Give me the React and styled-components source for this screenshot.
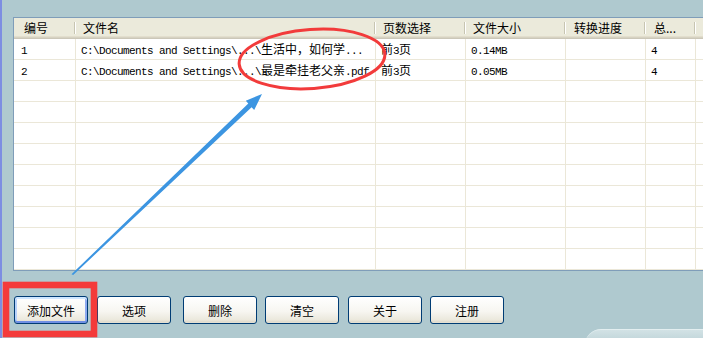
import styled, { createGlobalStyle } from "styled-components";

const GlobalStyle = createGlobalStyle`
  html, body {
    margin: 0;
    padding: 0;
  }
  body {
    width: 703px;
    height: 338px;
    overflow: hidden;
    background: #afc9cf;
    font-family: "Noto Sans CJK SC", "DejaVu Sans", sans-serif;
    font-size: 12px;
    color: #000;
  }
`;

const Page = styled.div`
  position: relative;
  width: 703px;
  height: 338px;
  overflow: hidden;
`;

const Window = styled.div`
  box-sizing: border-box;
  width: 703px;
  height: 338px;
  border-left: 2px solid #7d8de2;
  padding: 17px 0 0 11px;
  display: flex;
  flex-direction: column;
`;

const ListView = styled.div`
  width: 720px;
  border: 1px solid #7f9db9;
  border-right: none;
  background: #fff;
`;

const columns = "62px 300px 90px 100px 80px 50px 1fr";

const HeaderRow = styled.div`
  display: grid;
  grid-template-columns: ${columns};
  height: 21px;
  background: #ebeadb;
  box-shadow: inset 0 -1px #cbc7b8, inset 0 -2px #d6d2c2, inset 0 -3px #e2decd;
`;

const HeaderCell = styled.div`
  position: relative;
  padding-left: ${(p) => p.$pad || 8}px;
  line-height: 19px;
  white-space: nowrap;
  overflow: hidden;

  &::after {
    content: "";
    position: absolute;
    right: 1px;
    top: 4px;
    bottom: 5px;
    width: 1px;
    background: #c7c5b2;
    box-shadow: 1px 0 #fff;
  }
`;

const Row = styled.div`
  display: grid;
  grid-template-columns: ${columns};
  height: 21px;
  box-sizing: border-box;
  border-bottom: 1px solid #ebe7d8;
`;

const Cell = styled.div`
  box-sizing: border-box;
  border-right: 1px solid #ebe7d8;
  padding-left: ${(p) => p.$pad || 5}px;
  line-height: 20px;
  white-space: nowrap;
  overflow: hidden;
`;

const Latin = styled.span`
  font-family: "Liberation Mono", "DejaVu Sans Mono", monospace;
  font-size: 11px;
  letter-spacing: -0.6px;
`;

const Footer = styled.div`
  display: flex;
  align-items: flex-start;
  padding: 25px 0 0 1px;
`;

const Button = styled.button`
  box-sizing: border-box;
  width: 74px;
  height: 28px;
  margin: 0 0 0 ${(p) => p.$space || 0}px;
  padding: 0;
  border: 1px solid #003c74;
  border-radius: 3px;
  background: linear-gradient(180deg, #ffffff 0%, #f7f6f1 55%, #ebe8dc 88%, #d8d2c4 100%);
  font-family: "Noto Sans CJK SC", sans-serif;
  font-size: 12px;
  color: #000;
  box-shadow: ${(p) =>
    p.$default
      ? "inset 0 2px #cee7ff, inset 0 -2px #6f8fe4, inset 2px 0 #b8d2fa, inset -2px 0 #8eaaf0"
      : "inset 0 -1px #e3dfd2"};
`;

const Corner = styled.div`
  margin: 33px 0 0 auto;
  width: 118px;
  height: 20px;
  border-top-left-radius: 16px;
  border-top: 1px solid #e3eef0;
  background: linear-gradient(180deg, #d2e2e5 0%, #bfd4d8 60%, #b6cdd2 100%);
`;

const Annotations = styled.svg`
  position: absolute;
  left: 0;
  top: 0;
  pointer-events: none;
`;

const headers = [
  { label: "编号", pad: 10 },
  { label: "文件名", pad: 7 },
  { label: "页数选择", pad: 7 },
  { label: "文件大小", pad: 7 },
  { label: "转换进度", pad: 8 },
  { label: "总...", pad: 8 },
  { label: "", pad: 8 },
];

const files = [
  ["1", "C:\\Documents and Settings\\...\\生活中，如何学...", "前3页", "0.14MB", "", "4"],
  ["2", "C:\\Documents and Settings\\...\\最是牵挂老父亲.pdf", "前3页", "0.05MB", "", "4"],
];

const buttons = [
  { label: "添加文件", space: 0, isDefault: true },
  { label: "选项", space: 9 },
  { label: "删除", space: 12 },
  { label: "清空", space: 8 },
  { label: "关于", space: 9 },
  { label: "注册", space: 8 },
];

function Mixed({ text }) {
  return text
    .split(/([\x20-\x7e]+)/)
    .filter(Boolean)
    .map((part, i) =>
      /^[\x20-\x7e]+$/.test(part) ? <Latin key={i}>{part}</Latin> : <span key={i}>{part}</span>
    );
}

export default function App() {
  const rows = Array.from({ length: 11 }, (_, i) => files[i] || ["", "", "", "", "", ""]);

  return (
    <Page>
      <GlobalStyle />
      <Window>
        <ListView>
          <HeaderRow>
            {headers.map((h, i) => (
              <HeaderCell key={i} $pad={h.pad}>
                {h.label}
              </HeaderCell>
            ))}
          </HeaderRow>
          {rows.map((row, r) => (
            <Row key={r}>
              {row.map((value, c) => (
                <Cell key={c} $pad={c === 0 ? 7 : 5}>
                  <Mixed text={value} />
                </Cell>
              ))}
              <Cell />
            </Row>
          ))}
        </ListView>
        <Footer>
          {buttons.map((b) => (
            <Button key={b.label} $space={b.space} $default={b.isDefault}>
              {b.label}
            </Button>
          ))}
          <Corner />
        </Footer>
      </Window>
      <Annotations width="703" height="338" viewBox="0 0 703 338">
        <ellipse
          cx="312"
          cy="59"
          rx="73"
          ry="29.5"
          transform="rotate(-4 312 59)"
          fill="none"
          stroke="#f23b3b"
          strokeWidth="3"
        />
        <polygon
          points="71.5,274.2 73.2,275 251.6,107.2 254.2,110 262,94 245.8,100.8 248.3,103.6"
          fill="#3c95e1"
        />
        <rect x="6" y="285" width="88" height="49" fill="none" stroke="#f43a3a" strokeWidth="6.6" />
      </Annotations>
    </Page>
  );
}
